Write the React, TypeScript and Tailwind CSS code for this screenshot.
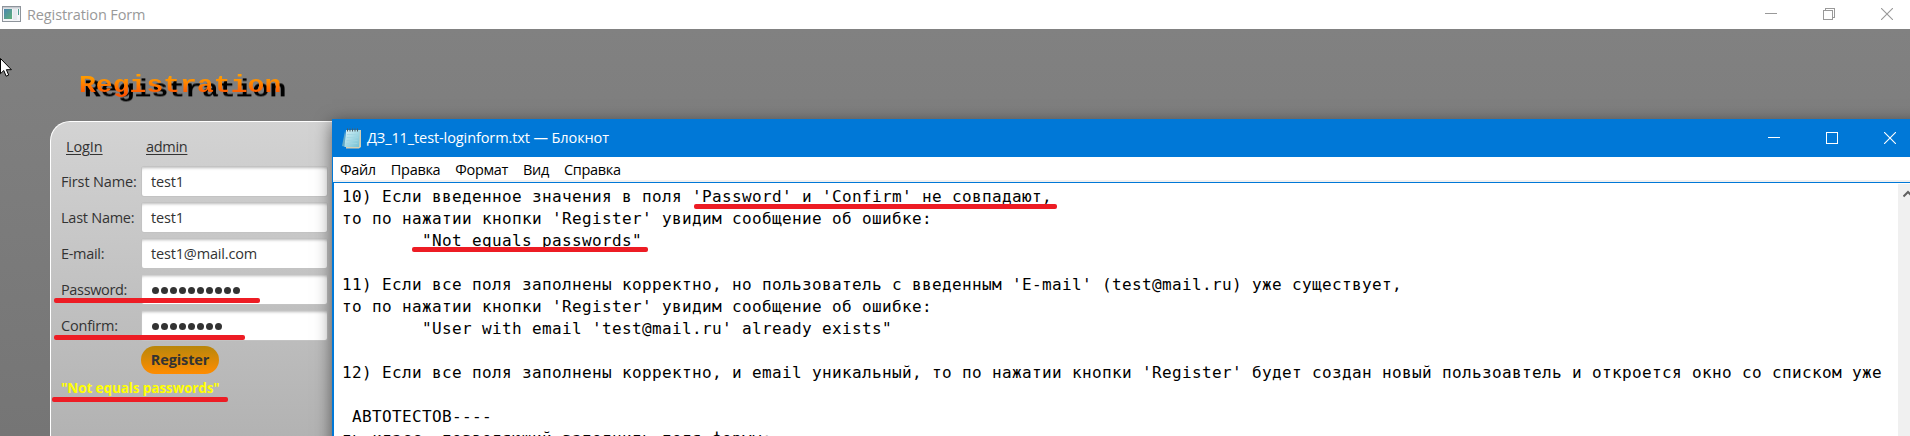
import React from "react";

const fields = [
  { label: "First Name:", value: "test1", labelClass: "tracking-[-0.15px]" },
  { label: "Last Name:", value: "test1", labelClass: "tracking-[-0.25px]" },
  { label: "E-mail:", value: "test1@mail.com", labelClass: "tracking-[-0.3px]" },
  { label: "Password:", dots: 10, labelClass: "tracking-[-0.35px]" },
  { label: "Confirm:", dots: 8, labelClass: "tracking-[-0.2px]" },
];

const lines = [
  "10) Если введенное значения в поля 'Password' и 'Confirm' не совпадают,",
  "то по нажатии кнопки 'Register' увидим сообщение об ошибке:",
  "        \"Not equals passwords\"",
  "",
  "11) Если все поля заполнены корректно, но пользователь с введенным 'E-mail' (test@mail.ru) уже существует,",
  "то по нажатии кнопки 'Register' увидим сообщение об ошибке:",
  "        \"User with email 'test@mail.ru' already exists\"",
  "",
  "12) Если все поля заполнены корректно, и email уникальный, то по нажатии кнопки 'Register' будет создан новый пользоавтель и откроется окно со списком уже",
  "",
  " АВТОТЕСТОВ----",
  "ть класс, позволяющий заполнить поля формы:",
];

function Minimize() {
  return (
    <svg width="12" height="12" viewBox="0 0 12 12" shapeRendering="crispEdges">
      <path d="M0 5.5h12" stroke="currentColor" />
    </svg>
  );
}

function Restore() {
  return (
    <svg width="12" height="12" viewBox="0 0 12 12" fill="none" stroke="currentColor" shapeRendering="crispEdges">
      <path d="M.5 2.5h9v9h-9zM2.5 2.5v-2h9v9h-2" />
    </svg>
  );
}

function Maximize() {
  return (
    <svg width="12" height="12" viewBox="0 0 12 12" fill="none" stroke="currentColor" shapeRendering="crispEdges">
      <path d="M.5 .5h11v11h-11z" />
    </svg>
  );
}

function Close() {
  return (
    <svg width="12" height="12" viewBox="0 0 12 12" fill="none" stroke="currentColor" strokeWidth="1.1">
      <path d="M0 0l12 12M12 0L0 12" />
    </svg>
  );
}

function AppIcon() {
  return (
    <svg width="19" height="16" viewBox="0 0 19 16">
      <defs>
        <linearGradient id="pane" x1="0" y1="0" x2="1" y2="1">
          <stop offset="0" stopColor="#4a86b0" />
          <stop offset="1" stopColor="#5fb078" />
        </linearGradient>
      </defs>
      <rect x=".5" y=".5" width="18" height="15" fill="#f4f5f7" stroke="#8e949b" />
      <rect x="1" y="1" width="17" height="1.5" fill="#c5cad0" />
      <rect x="2" y="3" width="8" height="10" fill="url(#pane)" />
      <rect x="11" y="3" width="4" height="11" fill="#e6e9ee" />
      <rect x="16" y="3" width="1" height="6" fill="#4f9e92" />
    </svg>
  );
}

function NotepadIcon() {
  return (
    <svg width="20" height="21" viewBox="0 0 20 21">
      <defs>
        <linearGradient id="sheet" x1="0" y1="0" x2="1" y2="1">
          <stop offset="0" stopColor="#d8f3f8" />
          <stop offset="1" stopColor="#72bfd2" />
        </linearGradient>
      </defs>
      <path d="M3 3L0 18l4 1z" fill="#63a9c6" />
      <path d="M4 2h15v17l-2 1.500H4z" fill="#d5cfb4" />
      <path d="M4 2h14l-1 17H2.500z" fill="url(#sheet)" />
      <path d="M5 6.500h11M4.800 9.500h11M4.600 12.500h11M4.400 15.500h11" stroke="#9fd6e2" strokeWidth=".8" />
      <path d="M5.500 .5v3M8 .5v3M10.500 .5v3M13 .5v3M15.500 .5v3" stroke="#4c5a60" />
    </svg>
  );
}

function RegistrationWindow() {
  return (
    <div className="flex h-full w-full flex-col">
      <header className="flex h-[29px] shrink-0 items-center bg-white pl-[2px] pr-[17px] text-[#999999]">
        <div className="-mt-[2px]">
          <AppIcon />
        </div>
        <span className="ml-[6px] flex-1 text-[14.5px] tracking-[-0.12px]">Registration Form</span>
        <div className="flex -mt-px gap-[46px]">
          <Minimize />
          <Restore />
          <Close />
        </div>
      </header>
      <main className="min-h-0 flex-1 bg-linear-to-b from-[#818181] to-[#757575] pl-[50px] pt-[40px]">
        <h1 className="ml-[29px] h-[52px] w-[220px] font-['Liberation_Mono'] text-[28px] leading-[32px] font-bold tracking-[0.05px]">
          <span className="inline-block origin-[0_23px] scale-y-[0.88] drop-shadow-[5px_5px_0_#000000]">
            <span className="bg-linear-to-b from-[#ff9a00] from-20% to-[#ff5500] to-80% bg-clip-text text-transparent">Registration</span>
          </span>
        </h1>
        <section className="h-[340px] w-[420px] rounded-tl-[20px] border-l border-t border-white bg-linear-to-b from-[#d3d3d3] to-[#b0b0b0] pl-[10px] pt-[11px] text-[14.5px] text-[#333333]">
          <nav className="flex h-[34px] pl-[5px] leading-[28px]">
            <a className="w-[80px] tracking-[-0.1px] underline underline-offset-2">LogIn</a>
            <a className="tracking-[-0.3px] underline underline-offset-2">admin</a>
          </nav>
          <div className="flex flex-col gap-[7px]">
            {fields.map((f) => (
              <div key={f.label} className="flex h-[29px] items-center">
                <label className={"w-[81px] whitespace-nowrap " + f.labelClass}>{f.label}</label>
                <div className="flex h-[29px] w-[185px] items-center rounded-[2px] bg-white pl-[9px] tracking-[-0.17px] shadow-[0_0_0_1px_#c3c3c3,inset_0_3px_3px_-2px_#bbbbbb]">
                  {f.dots ? (
                    <div className="flex gap-[2px] pl-px pt-[2px]">
                      {Array.from({ length: f.dots }, (_, i) => (
                        <span key={i} className="size-[7px] rounded-full bg-[#333333]" />
                      ))}
                    </div>
                  ) : (
                    f.value
                  )}
                </div>
              </div>
            ))}
          </div>
          <button className="ml-[80px] mt-[6px] block h-[28px] w-[78px] rounded-full bg-linear-to-b from-[#b8860b] to-[#ff8c00] text-[14.5px] leading-[28px] font-bold tracking-[-0.1px]">
            Register
          </button>
          <p className="pt-[4px] text-[13.5px] leading-[20px] font-bold tracking-[-0.1px] text-[#ffff00]">"Not equals passwords"</p>
        </section>
      </main>
    </div>
  );
}

function NotepadWindow() {
  return (
    <div className="absolute left-[332px] top-[119px] flex h-[400px] w-[1600px] flex-col border-l border-[#0078d7] bg-white shadow-[0_4px_16px_rgba(0,0,0,0.55)]">
      <header className="flex h-[38px] w-[1577px] shrink-0 items-center bg-[#0078d7] pl-[9px] pr-[14px] text-white">
        <NotepadIcon />
        <span className="ml-[5px] flex-1 text-[14.5px] tracking-[-0.1px]">ДЗ_11_test-loginform.txt — Блокнот</span>
        <div className="flex -mt-px gap-[46px]">
          <Minimize />
          <Maximize />
          <Close />
        </div>
      </header>
      <nav className="flex h-[25px] shrink-0 items-center gap-[15px] border-b-2 border-[#f0f0f0] pl-[7px] pt-[2px] text-[14.5px] tracking-[-0.32px] text-black">
        <span>Файл</span>
        <span>Правка</span>
        <span>Формат</span>
        <span>Вид</span>
        <span>Справка</span>
      </nav>
      <div className="flex min-h-0 flex-1 border-l border-t border-[#0078d7]">
        <div className="w-[1564px] shrink-0 whitespace-pre pl-[8px] pt-[3px] font-['DejaVu_Sans_Mono'] text-[16px] leading-[22px] tracking-[0.367px] text-black">
          {lines.map((line, i) => (
            <div key={i} className="h-[22px]">{line}</div>
          ))}
        </div>
        <div className="mt-px flex-1 bg-[#f0f0f0] pl-[5px] pt-[6px]">
          <svg width="10" height="8" viewBox="0 0 10 8" fill="none" stroke="#606060" strokeWidth="2">
            <path d="M.5 6.500L5 2l4.500 4.500" />
          </svg>
        </div>
      </div>
    </div>
  );
}

export default function App() {
  return (
    <div className="relative h-[436px] w-[1910px] overflow-hidden font-['Open_Sans',sans-serif]">
      <RegistrationWindow />
      <NotepadWindow />
      <div className="absolute left-[54px] top-[298px] h-[5px] w-[206px] rounded-[2px] bg-[#ed1c24]" />
      <div className="absolute left-[54px] top-[335px] h-[5px] w-[191px] rounded-[2px] bg-[#ed1c24]" />
      <div className="absolute left-[52px] top-[397px] h-[5px] w-[176px] rounded-[2px] bg-[#ed1c24]" />
      <div className="absolute left-[694px] top-[204px] h-[5px] w-[363px] rounded-[2px] bg-[#ed1c24]" />
      <div className="absolute left-[412px] top-[247px] h-[5px] w-[236px] rounded-[2px] bg-[#ed1c24]" />
      <svg className="absolute left-0 top-[58px]" width="13" height="20" viewBox="0 0 13 20">
        <path d="M.5 .5v15.200l3.300-3.200 2.300 5.700 2.600-1.100-2.300-5.400h5z" fill="white" stroke="black" />
      </svg>
    </div>
  );
}
